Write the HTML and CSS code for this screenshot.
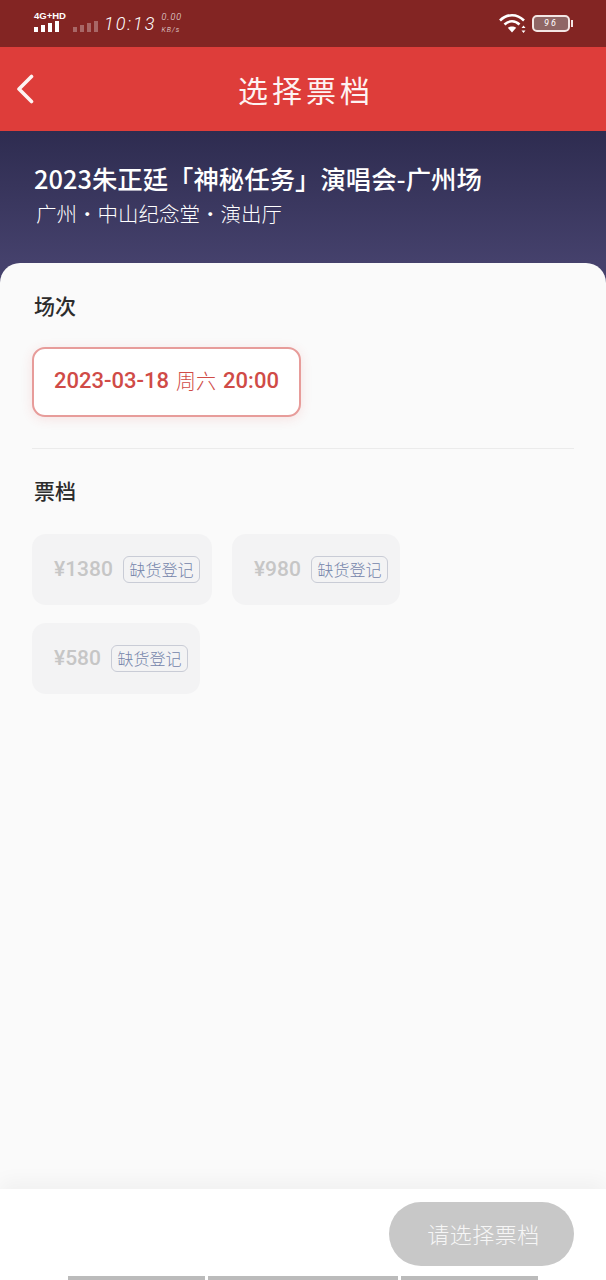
FILE: index.html
```html
<!DOCTYPE html>
<html lang="zh-CN">
    <head>
        <meta charset="utf-8">
        <title>选择票档</title>
        <link rel="stylesheet" href="styles.css">
    </head>
    <body>
        <div class="status">
            <div class="net">
                <span class="net-label">4G<sup>+</sup>HD</span>
                <span class="bars">
                    <i class="b1"></i><i class="b2"></i><i class="b3"></i><i class="b4"></i>
                </span>
            </div>
            <span class="bars dim">
                <i class="b1"></i><i class="b2"></i><i class="b3"></i><i class="b4"></i>
            </span>
            <span class="clock">10:13</span>
            <span class="speed">0.00<br><small>KB/s</small></span>
            <span class="status-space"></span>
            <svg class="wifi" width="28" height="22" viewBox="0 0 28 22">
                <path d="M1 8.5C8 1.5 18 1.5 25 8.5" fill="none" stroke="#fff" stroke-width="2.6"/>
                <path d="M5.5 12.5C10 8.2 16 8.2 20.5 12.5" fill="none" stroke="#fff" stroke-width="2.6"/>
                <path d="M13 20.5L8.8 15.8C11 14 15 14 17.2 15.8Z" fill="#fff"/>
                <path d="M24.5 13.5l2 2.5h-4zM24.5 21l2-2.5h-4z" fill="#fff"/>
            </svg>
            <div class="battery">
                <span class="battery-body">96</span>
                <span class="battery-tip"></span>
            </div>
        </div>

        <header class="topbar">
            <svg class="back" width="18" height="30" viewBox="0 0 18 30">
                <path d="M15.5 2.5L3 15l12.5 12.5" fill="none" stroke="#fdf3f2" stroke-width="3.6" stroke-linecap="round" stroke-linejoin="round"/>
            </svg>
            <h1 class="page-title">选择票档</h1>
        </header>

        <div class="main">
            <section class="banner">
                <div class="show-name">2023朱正廷「神秘任务」演唱会-广州场</div>
                <div class="show-place">广州·中山纪念堂·演出厅</div>
            </section>

            <section class="sheet">
                <h2 class="sec-title">场次</h2>
                <div class="session">
                    <span>2023-03-18</span> <span class="cjk">周六</span> <span>20:00</span>
                </div>
                <div class="divider"></div>
                <h2 class="sec-title">票档</h2>
                <div class="tickets">
                    <div class="ticket"><span class="price">¥1380</span><span class="tag">缺货登记</span></div>
                    <div class="ticket"><span class="price">¥980</span><span class="tag">缺货登记</span></div>
                    <div class="ticket"><span class="price">¥580</span><span class="tag">缺货登记</span></div>
                </div>
            </section>

            <footer class="footer">
                <button class="buy">请选择票档</button>
                <div class="nav-strip">
                    <i class="s1"></i><i class="s2"></i><i class="s3"></i>
                </div>
            </footer>
        </div>
    </body>
</html>
```

FILE: styles.css
```css
* {
    box-sizing: border-box;
}

html, body {
    margin: 0;
    height: 1280px;
    overflow: hidden;
}

body {
    display: flex;
    flex-direction: column;
    font-family: "Noto Sans CJK SC", "Noto Sans", sans-serif;
    background: #fafafa;
}

h1, h2 {
    margin: 0;
    font-weight: normal;
}

/* status bar */
.status {
    height: 47px;
    flex: none;
    display: flex;
    align-items: center;
    padding: 0 33px 4px 34px;
    background: #832523;
    color: #fff;
}

.net {
    width: 39px;
    display: flex;
    flex-direction: column;
    gap: 1px;
}

.net-label {
    font: bold 9.5px/9px "Liberation Sans", sans-serif;
}

.net-label sup {
    font-size: 9.5px;
    line-height: 0;
    vertical-align: baseline;
}

.bars {
    display: flex;
    align-items: flex-end;
    gap: 3px;
    height: 11px;
}

.bars i {
    width: 4px;
    background: #fff;
}

.bars .b1 { height: 5px; }
.bars .b2 { height: 7px; }
.bars .b3 { height: 9px; }
.bars .b4 { height: 11px; }

.bars.dim {
    align-self: flex-end;
    margin-bottom: 11px;
    opacity: 0.3;
}

.clock {
    margin: 4px 0 0 6px;
    font: italic 300 18px/1 Roboto, sans-serif;
    letter-spacing: 2px;
}

.speed {
    margin: 4px 0 0 5px;
    font: italic 300 9px/12px Roboto, sans-serif;
    letter-spacing: 1px;
    opacity: 0.9;
}

.speed small {
    font-size: 7px;
}

.status-space {
    flex: 1;
}

.wifi {
    margin: 2px 5px 0 0;
}

.battery {
    display: flex;
    align-items: center;
    margin-top: 4px;
}

.battery-body {
    width: 38px;
    height: 17px;
    border: 2px solid #f3e6e4;
    border-radius: 5px;
    background: #8f6665;
    font: italic 9px/13px Roboto, sans-serif;
    letter-spacing: 2px;
    text-align: center;
}

.battery-tip {
    width: 2px;
    height: 7px;
    margin-left: 1px;
    background: #f3e6e4;
}

/* red title bar */
.topbar {
    height: 84px;
    flex: none;
    display: flex;
    align-items: center;
    justify-content: center;
    position: relative;
    background: #de3d3a;
}

.back {
    position: absolute;
    left: 16px;
    top: 27px;
}

.page-title {
    padding-left: 6px;
    color: #fdf3f2;
    font-size: 30px;
    letter-spacing: 4px;
    line-height: 40px;
}

.main {
    flex: 1;
    display: flex;
    flex-direction: column;
    background: #45416c;
}

/* show info */
.banner {
    height: 132px;
    flex: none;
    padding: 28px 0 0 34px;
    background: linear-gradient(#2e2c50, #45416c);
    color: #fff;
}

.show-name {
    font-size: 25.4px;
    font-weight: 500;
    line-height: 38px;
}

.show-place {
    margin-left: 2px;
    font-size: 20.5px;
    font-weight: 300;
    line-height: 32px;
}

/* white sheet */
.sheet {
    flex: 1;
    padding: 25px 32px 0;
    border-radius: 20px 20px 0 0;
    background: #fafafa;
}

.sec-title {
    padding-left: 2px;
    color: #2c2c2c;
    font-size: 21px;
    font-weight: 500;
    line-height: 34px;
}

.session {
    width: 269px;
    height: 70px;
    margin-top: 25px;
    padding-bottom: 2px;
    display: flex;
    align-items: center;
    justify-content: center;
    gap: 7px;
    border: 2px solid #e79c9a;
    border-radius: 13px;
    background: #fff;
    box-shadow: 0 2px 12px rgba(224, 62, 60, 0.13);
    color: #d04b47;
    font: 500 22px/1 Roboto, sans-serif;
}

.session .cjk {
    font-family: "Noto Sans CJK SC", sans-serif;
    font-size: 20px;
    font-weight: 300;
}

.divider {
    height: 1px;
    margin: 31px 0 24px;
    background: #ebebeb;
}

.tickets {
    display: flex;
    flex-wrap: wrap;
    gap: 18px 20px;
    margin-top: 27px;
}

.ticket {
    height: 71px;
    display: flex;
    align-items: center;
    gap: 10px;
    padding: 0 12px 0 22px;
    border-radius: 14px;
    background: #f3f3f4;
}

.price {
    color: #c6c6c6;
    font: 500 21px/1 Roboto, sans-serif;
}

.tag {
    height: 27px;
    padding: 0 5.5px;
    border: 1px solid #c9ccd6;
    border-radius: 6px;
    color: #7484aa;
    font-size: 16px;
    font-weight: 300;
    line-height: 25px;
    white-space: nowrap;
}

/* bottom bar */
.footer {
    height: 91px;
    flex: none;
    display: flex;
    flex-direction: column;
    align-items: flex-end;
    padding-top: 13px;
    background: #fff;
    box-shadow: 0 -8px 18px rgba(0, 0, 0, 0.04);
    z-index: 1;
}

.buy {
    width: 185px;
    height: 64px;
    margin-right: 32px;
    padding: 0 0 3px 4px;
    border: 0;
    border-radius: 32px;
    background: #c8c8c8;
    color: #f6f6f6;
    font-family: inherit;
    font-size: 22px;
    font-weight: 300;
    letter-spacing: 0.5px;
}

.nav-strip {
    align-self: stretch;
    height: 4px;
    margin-top: 10px;
    padding-left: 68px;
    display: flex;
    gap: 3px;
}

.nav-strip i {
    background: #bbb;
}

.nav-strip .s1 { width: 137px; }
.nav-strip .s2 { width: 190px; }
.nav-strip .s3 { width: 137px; }
```
